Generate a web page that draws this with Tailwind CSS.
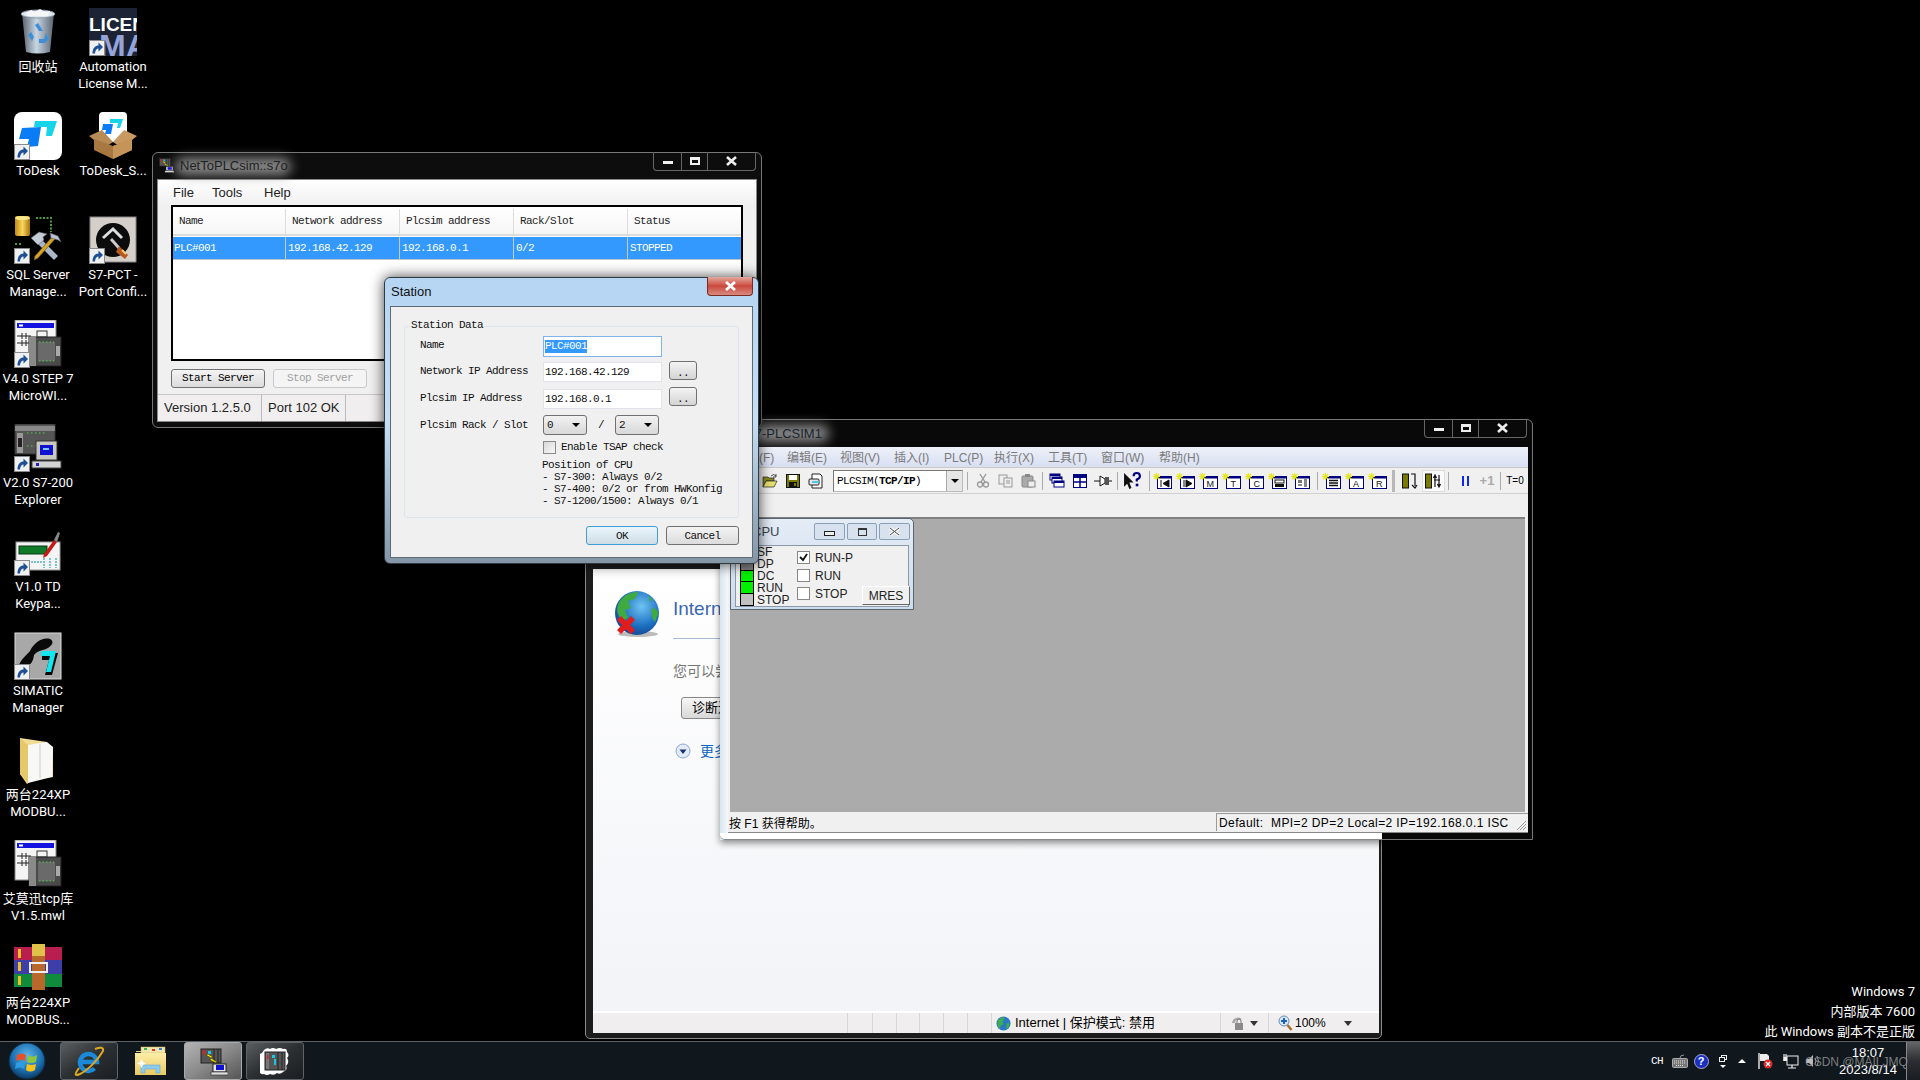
<!DOCTYPE html>
<html lang="en">
<head>
  <meta charset="UTF-8">
  <title>Desktop</title>
  <script src="https://cdn.jsdelivr.net/npm/@tailwindcss/browser@4"></script>
</head>
<body class="bg-black">
<!-- shared icons -->
<svg class="absolute w-0 h-0">
  <defs>
    <linearGradient id="bin" x1="0" x2="1"><stop offset="0" stop-color="#58626c"/><stop offset=".45" stop-color="#c8d6e4"/><stop offset="1" stop-color="#5a6470"/></linearGradient>
    <radialGradient id="orb" cx=".5" cy=".35" r=".7"><stop offset="0" stop-color="#5fb5e8"/><stop offset=".6" stop-color="#1a6fb0"/><stop offset="1" stop-color="#0b2c4f"/></radialGradient>
    <radialGradient id="globe" cx=".6" cy=".35" r=".75"><stop offset="0" stop-color="#6fc4f2"/><stop offset=".6" stop-color="#1c6fc0"/><stop offset="1" stop-color="#123a86"/></radialGradient>
    <linearGradient id="gold" x1="0" x2="1"><stop offset="0" stop-color="#c58a12"/><stop offset=".5" stop-color="#f8d660"/><stop offset="1" stop-color="#a87408"/></linearGradient>
    <linearGradient id="fold" x1="0" y1="0" x2="0" y2="1"><stop offset="0" stop-color="#fdeea8"/><stop offset="1" stop-color="#e8c864"/></linearGradient>

    <symbol id="sc" viewBox="0 0 16 16"><rect x=".5" y=".5" width="15" height="15" fill="#eef0f2" stroke="#8a8a8a"/><path d="M3.500 13.500C3.500 8 6.500 5.500 9.500 5.500V2.500L14 7l-4.500 4.500V8.500C7.500 8.500 6 10.500 6 13.500Z" fill="#1c4f94"/></symbol>

    <symbol id="step7" viewBox="0 0 48 48"><rect x="1" y="0" width="41" height="40" fill="#f4f4f4" stroke="#888"/><rect x="3" y="3" width="37" height="5" fill="#1414e0"/><rect x="5" y="4.500" width="4" height="2" fill="#fff"/><path d="M3 16h14M8 13v6M12 13v6M3 23h14M8 20v6M12 20v6" stroke="#222" fill="none"/><rect x="15" y="17" width="32" height="29" fill="#4a4a4a" stroke="#222"/><rect x="15" y="17" width="7" height="29" fill="#8a8a8a"/><rect x="24" y="22" width="17" height="19" fill="#6a6a6a"/><path d="M25 22h15M25 41h15" stroke="#4fd04f" stroke-dasharray="1.500 2"/><rect x="42" y="26" width="4" height="10" fill="#aaa"/><rect x="23" y="11" width="10" height="6" fill="none" stroke="#333"/></symbol>

    <symbol id="explorer" viewBox="0 0 48 48"><rect x="1" y="0" width="40" height="30" fill="#555" stroke="#333"/><rect x="1" y="2" width="40" height="5" fill="#888"/><path d="M13 9h20M13 22h10" stroke="#4fd04f" stroke-dasharray="1.500 2.500"/><rect x="3" y="9" width="6" height="20" fill="#999"/><rect x="4" y="14" width="4" height="9" fill="#222"/><rect x="22" y="17" width="21" height="19" fill="#c8c8c0" stroke="#333"/><rect x="26" y="21" width="13" height="10" fill="#1010d0"/><rect x="29" y="24" width="6" height="2" fill="#7cc4ff"/><rect x="18" y="37" width="29" height="7" fill="#d4d4d4" stroke="#444"/><rect x="22" y="39" width="3" height="3" fill="#2020c0"/></symbol>

    <symbol id="plcsim" viewBox="0 0 30 30"><path d="M4 4q3-3 6-1 3-2 6 0 4-2 7 0 4-1 4 3 3 3 0 6 3 4-1 8 2 4-3 6-3 3-6 1-3 3-7 1-3 2-6 0-4 1-5-3-3-3 0-6-3-4 1-7-2-4 2-5Z" fill="#fff"/><rect x="5" y="6" width="20" height="18" fill="#555" stroke="#222"/><rect x="6" y="7" width="3" height="16" fill="#777"/><rect x="7" y="9" width="1.500" height="4" fill="#e02020"/><rect x="12" y="9" width="3" height="3" fill="#19c8e0"/><rect x="14" y="13" width="2" height="6" fill="#19c8e0"/><path d="M18 6v18M22 6v18" stroke="#222"/></symbol>

    <symbol id="net" viewBox="0 0 30 30"><rect x="3" y="3" width="20" height="14" fill="#555" stroke="#222"/><rect x="5" y="4" width="2" height="5" fill="#e02020"/><rect x="10" y="5" width="3" height="3" fill="#19c8e0"/><path d="M16 3v14M20 3v14" stroke="#222"/><rect x="15" y="18" width="13" height="8" fill="#e8e8e8" stroke="#222"/><rect x="18" y="19" width="8" height="5" fill="#1010d0"/><rect x="13" y="26" width="17" height="3" fill="#ddd" stroke="#222" stroke-width=".6"/><path d="M10 8l5 3-2 1 6 4-1 1-6-3 1-2-5-3Z" fill="#ffe800" stroke="#222" stroke-width=".5"/></symbol>

    <symbol id="ie" viewBox="0 0 34 30"><path d="M9 16h16a8.500 8.500 0 1 0-2.500 6.500" fill="none" stroke="#1a8ad8" stroke-width="4.500"/><path d="M7 22C2 29 3 30 8 28c8-4 18-14 23-23 1-4-3-4-8-2" fill="none" stroke="#e0a820" stroke-width="2"/></symbol>

    <symbol id="folder" viewBox="0 0 32 30"><path d="M1 5h9l2-2h16v3H1Z" fill="#e6d48a"/><rect x="6" y="1" width="24" height="6" fill="#f3e6ac" stroke="#c8b466" stroke-width=".5"/><rect x="9" y="2" width="3" height="2" fill="#3cb04a"/><rect x="17" y="3" width="3" height="2" fill="#d83a2a"/><rect x="24" y="2" width="3" height="2" fill="#3a7ad8"/><path d="M0 7h31v22H0Z" fill="url(#fold)"/><path d="M6 27v-8h19v8h-4v-4H10v4Z" fill="#8ccbee" stroke="#6aa8d0" stroke-width=".6"/><path d="M5 16l1.500-3 1.500 3 3 1.500-3 1.500-1.500 3-1.500-3-3-1.500Z" fill="#fff" opacity=".9"/></symbol>

    <!-- base of the PLCSIM monitor buttons: window with a blue title and a yellow spark -->
    <symbol id="mon" viewBox="0 0 19 16"><rect x="4.500" y="3.500" width="14" height="12" fill="#fff" stroke="#000080"/><rect x="5" y="3" width="13.500" height="2.500" fill="#000080"/><path d="M3.500 0v7M0 3.500h7M1 1l5 5M6 1L1 6" stroke="#e6e61e" stroke-width="1.200"/></symbol>
  </defs>
</svg>

<div class="relative w-[1920px] h-[1080px] overflow-hidden bg-black text-black [font-family:'Liberation_Sans','Noto_Sans_CJK_SC',sans-serif]">

  <!-- desktop icons -->
  <div class="absolute left-0 top-[8px] flex text-white text-[13px] leading-[17px] text-center [font-family:'Roboto','Noto_Sans_CJK_SC',sans-serif]">
    <div class="w-[76px] flex flex-col">
      <div class="h-[104px] flex flex-col items-center">
        <div class="w-[48px] h-[48px] relative">
          <svg class="w-[48px] h-[48px]" viewBox="0 0 48 48"><path d="M8 5h32l-4 39q-12 3-24 0Z" fill="url(#bin)"/><ellipse cx="24" cy="6" rx="17" ry="4" fill="#dfe7ee" stroke="#8895a2"/><path d="M12 5l5-3 4 2 5-3 5 3 5-1-2 5H13Z" fill="#f4f6f8"/><path d="M24 15l5 8h-4l-4-6Zm-7 9l3 5-2 4-4-6Zm15 1l3 6-4 4h-6v-4h5Z" fill="#3f8fd6"/></svg>
        </div>
        <span class="mt-[2px]">回收站</span>
      </div>
      <div class="h-[104px] flex flex-col items-center">
        <div class="w-[48px] h-[48px] relative">
          <svg class="w-[48px] h-[48px]" viewBox="0 0 48 48"><rect x="0" y="0" width="48" height="48" rx="8" fill="#fff"/><path d="M8 16l19-1-3 19-11 1 2-8H5Z" fill="#0a7cf5"/><path d="M21 9h22l-5 15h-6l1-9H20Z" fill="#16d4ea"/></svg>
          <svg class="absolute left-0 bottom-0 w-[16px] h-[16px]"><use href="#sc"/></svg>
        </div>
        <span class="mt-[2px]">ToDesk</span>
      </div>
      <div class="h-[104px] flex flex-col items-center">
        <div class="w-[48px] h-[48px] relative">
          <svg class="w-[48px] h-[48px]" viewBox="0 0 48 48"><rect x="1" y="0" width="15" height="20" rx="2" fill="url(#gold)"/><ellipse cx="8.500" cy="2" rx="7.500" ry="2" fill="#f9e88a"/><path d="M22 2h15v14" fill="none" stroke="#4e9c40" stroke-width="2" stroke-dasharray="2 1.500"/><path d="M1 28h6" stroke="#4e9c40" stroke-width="2" stroke-dasharray="2 2"/><path d="M20 24l20 20 4-4-20-20Z" fill="#a8b8c8" stroke="#556" stroke-width=".6"/><path d="M17 22l8-6 8 2-4 3 1 3-6 5Z" fill="#c4ccd6" stroke="#556" stroke-width=".6"/><path d="M42 22l-18 20-4 2 1-4 18-20Z" fill="#d8a420" stroke="#654" stroke-width=".6"/><path d="M36 17l8 3 3 6-3-2-7-2Z" fill="#b8c4d0" stroke="#556" stroke-width=".6"/></svg>
          <svg class="absolute left-0 bottom-0 w-[16px] h-[16px]"><use href="#sc"/></svg>
        </div>
        <span class="mt-[2px]">SQL Server<br>Manage...</span>
      </div>
      <div class="h-[104px] flex flex-col items-center">
        <div class="w-[48px] h-[48px] relative">
          <svg class="w-[48px] h-[48px]"><use href="#step7"/></svg>
          <svg class="absolute left-0 bottom-0 w-[16px] h-[16px]"><use href="#sc"/></svg>
        </div>
        <span class="mt-[2px]">V4.0 STEP 7<br>MicroWI...</span>
      </div>
      <div class="h-[104px] flex flex-col items-center">
        <div class="w-[48px] h-[48px] relative">
          <svg class="w-[48px] h-[48px]"><use href="#explorer"/></svg>
          <svg class="absolute left-0 bottom-0 w-[16px] h-[16px]"><use href="#sc"/></svg>
        </div>
        <span class="mt-[2px]">V2.0 S7-200<br>Explorer</span>
      </div>
      <div class="h-[104px] flex flex-col items-center">
        <div class="w-[48px] h-[48px] relative">
          <svg class="w-[48px] h-[48px]" viewBox="0 0 48 48"><rect x="2" y="14" width="44" height="28" fill="#f4f4f4" stroke="#999"/><rect x="5" y="18" width="28" height="8" fill="#107a28" stroke="#0a3a14"/><path d="M30 30v10M36 30v10M42 30v10M8 34h20" stroke="#79c4c4" stroke-width="2" stroke-dasharray="2 1"/><path d="M30 26l10-14 3 2-10 14-4 2Z" fill="#c81818"/><path d="M40 12l4-8 2 1-3 9Z" fill="#888"/></svg>
          <svg class="absolute left-0 bottom-0 w-[16px] h-[16px]"><use href="#sc"/></svg>
        </div>
        <span class="mt-[2px]">V1.0 TD<br>Keypa...</span>
      </div>
      <div class="h-[104px] flex flex-col items-center">
        <div class="w-[48px] h-[48px] relative">
          <svg class="w-[48px] h-[48px]" viewBox="0 0 48 48"><rect x="1" y="1" width="46" height="46" fill="#a8a8a8" stroke="#ddd"/><path d="M5 33c3-7 7-9 11-14 4-8 12-14 20-12 4 2 3 6-2 9-6 3-10 2-14 7-1 8-5 14-15 10Z" fill="#0a0a0a"/><path d="M28 21h16l-6 22h-7l4-15h-7Z" fill="#0a0a0a"/><path d="M27 19h15l-5 21h-5l4-16h-9Z" fill="#14e6f0"/></svg>
          <svg class="absolute left-0 bottom-0 w-[16px] h-[16px]"><use href="#sc"/></svg>
        </div>
        <span class="mt-[2px]">SIMATIC<br>Manager</span>
      </div>
      <div class="h-[104px] flex flex-col items-center">
        <div class="w-[48px] h-[48px] relative">
          <svg class="w-[48px] h-[48px]" viewBox="0 0 48 48"><path d="M6 2l27 4v3l6 2v30l-19 2-7 5L6 38Z" fill="#f0dc94"/><path d="M14 9l19-3 6 5-1 30-24 6Z" fill="#f8f8f6"/><path d="M26 8v34" stroke="#ccc"/><path d="M6 2l8 7v38L6 38Z" fill="#e6c868"/></svg>
        </div>
        <span class="mt-[2px]">两台224XP<br>MODBU...</span>
      </div>
      <div class="h-[104px] flex flex-col items-center">
        <div class="w-[48px] h-[48px] relative">
          <svg class="w-[48px] h-[48px]"><use href="#step7"/></svg>
        </div>
        <span class="mt-[2px]">艾莫迅tcp库<br>V1.5.mwl</span>
      </div>
      <div class="h-[104px] flex flex-col items-center">
        <div class="w-[48px] h-[48px] relative">
          <svg class="w-[48px] h-[48px]" viewBox="0 0 48 48"><rect x="0" y="3" width="48" height="13" fill="#b81e4e"/><rect x="0" y="16" width="48" height="14" fill="#3e3ea8"/><rect x="0" y="30" width="48" height="13" fill="#108a3c"/><rect x="4" y="5" width="3" height="9" fill="#f0c020"/><rect x="4" y="18" width="3" height="9" fill="#f0c020"/><rect x="4" y="32" width="3" height="9" fill="#f0c020"/><rect x="18" y="0" width="13" height="12" fill="#e0c24a"/><rect x="18" y="12" width="13" height="34" fill="#b8682a"/><rect x="16" y="19" width="17" height="9" fill="none" stroke="#eee" stroke-width="2"/></svg>
        </div>
        <span class="mt-[2px]">两台224XP<br>MODBUS...</span>
      </div>
    </div>
    <div class="w-[76px] -ml-[1px] flex flex-col">
      <div class="h-[104px] flex flex-col items-center">
        <div class="w-[48px] h-[48px] relative bg-[#1c2335] overflow-hidden font-bold leading-none text-left [font-family:'Liberation_Sans',sans-serif]">
          <span class="absolute left-0 top-[7px] text-[19px] text-white whitespace-nowrap">LICEN</span>
          <span class="absolute left-[10px] top-[22px] text-[32px] text-[#94a4d8] whitespace-nowrap">MA</span>
          <svg class="absolute left-0 bottom-0 w-[16px] h-[16px]"><use href="#sc"/></svg>
        </div>
        <span class="mt-[2px]">Automation<br>License M...</span>
      </div>
      <div class="h-[104px] flex flex-col items-center">
        <div class="w-[48px] h-[48px] relative">
          <svg class="w-[48px] h-[48px]" viewBox="0 0 48 48"><rect x="10" y="0" width="28" height="30" rx="4" fill="#fff"/><path d="M14 12l10 0-2 10-6 0 1-4h-4Z" fill="#0a7cf5"/><path d="M21 7h13l-3 9h-3l1-5h-8Z" fill="#16d4ea"/><path d="M0 24l13-6 11 12-9 6Z" fill="#b88a54"/><path d="M48 24l-13-6-11 12 9 6Z" fill="#c89a62"/><path d="M5 27l19 7 19-7v11l-19 9-19-9Z" fill="#a87840"/><path d="M24 34v13l19-9V27Z" fill="#c49458"/></svg>
        </div>
        <span class="mt-[2px]">ToDesk_S...</span>
      </div>
      <div class="h-[104px] flex flex-col items-center">
        <div class="w-[48px] h-[48px] relative">
          <svg class="w-[48px] h-[48px]" viewBox="0 0 48 48"><rect x="1" y="1" width="46" height="45" fill="#d4cfc8" stroke="#888"/><circle cx="24" cy="24" r="17" fill="#0c0c0c"/><path d="M14 22l10-9 9 9" fill="none" stroke="#ddd" stroke-width="3"/><path d="M22 23l8 9" stroke="#ccc" stroke-width="3"/><path d="M30 30l9 9-3 4-9-7Z" fill="#b85a20"/><path d="M33 34l4 4" stroke="#f0d080" stroke-width="2"/></svg>
          <svg class="absolute left-0 bottom-0 w-[16px] h-[16px]"><use href="#sc"/></svg>
        </div>
        <span class="mt-[2px]">S7-PCT -<br>Port Confi...</span>
      </div>
    </div>
  </div>

  <!-- Internet Explorer window, behind the others -->
  <div class="absolute left-[585px] top-[560px] w-[797px] h-[479px] bg-[#1c1c1c] border border-[#8a8a8a] rounded-b-[5px] pl-[7px] pr-[2px] pt-[8px] pb-[5px]">
    <div class="h-full flex flex-col bg-linear-to-b from-white to-[#f2f3f7]">
      <div class="flex-1 flex pl-[21px] pt-[22px] gap-[15px]">
        <div class="relative w-[44px] h-[46px]">
          <svg class="w-[48px] h-[48px]" viewBox="0 0 48 48"><ellipse cx="24" cy="43" rx="20" ry="3" fill="#bbb"/><circle cx="23" cy="22" r="22" fill="url(#globe)"/><path d="M6 10c5-7 12-9 18-9l-3 7-7 2 3 7-6 2 3 8-6 3C2 22 2 16 6 10ZM34 5l4 3-2 3ZM38 17c4 0 6 3 6 6l-3 8c-3-3-4-9-3-14Z" fill="#3faa3f"/><path d="M3 29l4-4 5 5 5-5 4 4-5 5 5 5-4 4-5-5-5 5-4-4 5-5Z" fill="#e21c1c"/></svg>
        </div>
        <div class="flex flex-col whitespace-nowrap">
          <span class="mt-[7px] text-[19px] leading-[22px] text-[#3a67b0]">Internet Explorer 无法显示该网页</span>
          <div class="mt-[18px] h-[1px] w-[500px] bg-[#aab8d0]"></div>
          <span class="mt-[23px] text-[14px] leading-[18px] text-[#777]">您可以尝试以下操作:</span>
          <button class="mt-[17px] ml-[8px] w-[110px] h-[22px] text-left pl-[10px] text-[13px] leading-[18px] border border-[#888] rounded-[3px] bg-linear-to-b from-[#f6f6f6] to-[#d8d8d8]">诊断连接问题</button>
          <div class="mt-[23px] flex items-center gap-[9px] ml-[2px]">
            <svg class="w-[16px] h-[16px]" viewBox="0 0 16 16"><circle cx="8" cy="8" r="7" fill="#e2eaf8" stroke="#8ea8d0"/><path d="M4.500 6.500h7L8 11Z" fill="#17306e"/></svg>
            <span class="text-[14px] leading-[18px] text-[#0a66c2]">更多信息</span>
          </div>
        </div>
      </div>
      <div class="h-[22px] flex items-center bg-[#f0eeee] border-t-2 border-white text-[13px]">
        <div class="w-[254px] h-full"></div>
        <div class="w-[25px] h-full border-l border-[#d8d6d6]"></div>
        <div class="w-[24px] h-full border-l border-[#d8d6d6]"></div>
        <div class="w-[23px] h-full border-l border-[#d8d6d6]"></div>
        <div class="w-[24px] h-full border-l border-[#d8d6d6]"></div>
        <div class="w-[24px] h-full border-l border-[#d8d6d6]"></div>
        <div class="w-[24px] h-full border-l border-[#d8d6d6]"></div>
        <div class="w-[229px] h-full border-l border-[#d8d6d6] flex items-center pl-[4px] gap-[4px]">
          <svg class="w-[15px] h-[15px]" viewBox="0 0 16 16"><circle cx="8" cy="8" r="7.500" fill="#2c78c8"/><path d="M3 4c2-3 5-3 6-2L7 6l1 3-3 1-1 4C1 10 1 7 3 4ZM11 8l3-1c1 3 0 5-3 7Z" fill="#3cae4a"/></svg>
          <span class="whitespace-nowrap">Internet | 保护模式: 禁用</span>
        </div>
        <div class="w-[48px] h-full border-l border-[#d8d6d6] flex items-center pl-[8px] gap-[5px]">
          <svg class="w-[16px] h-[17px]" viewBox="0 0 16 17"><path d="M3 8a6 6 0 0 1 10-4l-3 1a3 3 0 0 0-4 3Z" fill="#aaa"/><rect x="6" y="8" width="8" height="7" fill="#8a8a8a"/><path d="M8 8V6a2 2 0 0 1 4 0v2" fill="none" stroke="#777"/></svg>
          <span class="w-0 h-0 border-x-[4px] border-x-transparent border-t-[5px] border-t-[#333]"></span>
        </div>
        <div class="flex-1 h-full border-l border-[#d8d6d6] flex items-center pl-[9px] text-[12px]">
          <svg class="w-[15px] h-[16px]" viewBox="0 0 15 16"><circle cx="6" cy="6" r="5" fill="#dceaf8" stroke="#6a8ab0"/><path d="M6 3v6M3 6h6" stroke="#1c60c0" stroke-width="2"/><path d="M9.500 10l4 5" stroke="#a87030" stroke-width="2.500"/></svg>
          <span class="ml-[2px]">100%</span>
          <span class="ml-[18px] w-0 h-0 border-x-[4px] border-x-transparent border-t-[5px] border-t-[#333]"></span>
        </div>
      </div>
    </div>
  </div>

  <!-- S7-PLCSIM1 -->
  <div class="absolute left-[720px] top-[419px] w-[813px] h-[421px] rounded-t-[6px] bg-[#090909] border border-[#777] shadow-[0_3px_7px_rgba(0,0,0,0.45)]">
    <div class="absolute left-[-1px] top-[140px] bottom-[-1px] w-[8px] bg-linear-to-r from-[#d8e6f0] to-[#f4f8fa]"></div>
    <div class="absolute left-[-1px] bottom-[-1px] w-[662px] h-[7px] rounded-bl-[5px] bg-white border-b border-[#888]"></div>
    <div class="h-[27px] relative">
      <span class="absolute left-[18px] top-[5px] w-[90px] h-[17px] rounded-full bg-[#8c8c8c] blur-[6px]"></span>
      <span class="absolute left-[25px] top-[5px] text-[13px] leading-[17px] text-[#1a2530]">S7-PLCSIM1</span>
      <div class="absolute right-[5px] top-[-1px] h-[19px] flex border border-t-0 border-[#666] rounded-b-[4px] text-white">
        <div class="w-[28px] flex items-center justify-center border-r border-[#666]"><span class="w-[10px] h-[3px] mt-[3px] bg-[#eee]"></span></div>
        <div class="w-[26px] flex items-center justify-center border-r border-[#666]"><span class="w-[10px] h-[8px] border-2 border-t-[3px] border-[#eee]"></span></div>
        <div class="w-[47px] flex items-center justify-center"><svg class="w-[11px] h-[10px]" viewBox="0 0 11 10"><path d="M1 1l9 8M10 1l-9 8" stroke="#eee" stroke-width="2.600"/></svg></div>
      </div>
    </div>
    <div class="absolute left-[7px] right-[4px] top-[27px] bottom-[6px] flex flex-col bg-[#f0f0f0] border-b border-[#888]">
      <!-- menu -->
      <div class="h-[20px] shrink-0 flex items-center pl-[7px] pt-[2px] bg-linear-to-b from-[#eef1f9] to-[#d8dff2] text-[12px] text-[#7a7a7a] whitespace-nowrap">
        <span class="w-[52px]">文件(F)</span>
        <span class="w-[53px]">编辑(E)</span>
        <span class="w-[54px]">视图(V)</span>
        <span class="w-[50px]">插入(I)</span>
        <span class="w-[50px]">PLC(P)</span>
        <span class="w-[54px]">执行(X)</span>
        <span class="w-[53px]">工具(T)</span>
        <span class="w-[58px]">窗口(W)</span>
        <span>帮助(H)</span>
      </div>
      <!-- toolbar -->
      <div class="h-[27px] shrink-0 flex items-center pl-[30px] border-t border-[#c8c8c8] border-b border-b-[#d0d0d0] bg-[#f0f0f0]">
        <div class="w-[23px] flex justify-center"><svg class="w-[16px] h-[16px]" viewBox="0 0 16 16"><path d="M1 4h5l1 1h5v3H4L1 14Z" fill="#8a8a20" stroke="#222" stroke-width=".7"/><path d="M4 8h11l-3 6H1Z" fill="#e8e070" stroke="#222" stroke-width=".7"/><path d="M9 3q3-3 5 0M14 1v3h-3" fill="none" stroke="#222" stroke-width=".8"/></svg></div>
        <div class="w-[23px] flex justify-center"><svg class="w-[14px] h-[14px]" viewBox="0 0 14 14"><rect x=".5" y=".5" width="13" height="13" fill="#7a7a00" stroke="#111"/><rect x="3" y="1" width="8" height="5" fill="#fff"/><rect x="3" y="8" width="8" height="5" fill="#111"/><rect x="8" y="9" width="2" height="3" fill="#7a7a00"/></svg></div>
        <div class="w-[23px] flex justify-center"><svg class="w-[16px] h-[16px]" viewBox="0 0 16 16"><path d="M4 1h8l2 2v12H4Z" fill="#fff" stroke="#222"/><rect x="1" y="6" width="10" height="6" rx="1" fill="#e6e6e6" stroke="#222"/><rect x="4" y="8" width="7" height="2" fill="#4cc8e0"/></svg></div>
        <div class="ml-[6px] w-[130px] h-[22px] flex bg-white border border-[#777] border-r-[#bbb] border-b-[#bbb] [font-family:'Liberation_Mono',monospace] text-[11px] tracking-[-0.6px]">
          <span class="flex-1 pl-[3px] leading-[20px] whitespace-nowrap">PLCSIM(<b>TCP/IP</b>)</span>
          <span class="w-[16px] flex items-center justify-center bg-[#e6e6e6] border-l border-[#aaa]"><span class="w-0 h-0 border-x-[4px] border-x-transparent border-t-[4px] border-t-black"></span></span>
        </div>
        <span class="ml-[4px] mr-[3px] w-[1px] h-[18px] bg-[#aaa]"></span>
        <div class="w-[23px] flex justify-center"><svg class="w-[14px] h-[15px]" viewBox="0 0 14 15"><path d="M4 1l5 8M10 1L5 9" stroke="#999" stroke-width="1.400"/><circle cx="4" cy="11.500" r="2.500" fill="none" stroke="#999" stroke-width="1.300"/><circle cx="10" cy="11.500" r="2.500" fill="none" stroke="#999" stroke-width="1.300"/></svg></div>
        <div class="w-[23px] flex justify-center"><svg class="w-[15px] h-[14px]" viewBox="0 0 15 14"><rect x="1" y="1" width="8" height="9" fill="#eee" stroke="#999"/><rect x="6" y="4" width="8" height="9" fill="#eee" stroke="#999"/><path d="M8 7h4M8 9h4" stroke="#999"/></svg></div>
        <div class="w-[23px] flex justify-center"><svg class="w-[15px] h-[14px]" viewBox="0 0 15 14"><rect x="1" y="2" width="11" height="11" rx="1" fill="#aaa" stroke="#888"/><rect x="4" y="0" width="5" height="3" fill="#888"/><rect x="7" y="7" width="7" height="6" fill="#eee" stroke="#888"/></svg></div>
        <span class="ml-[2px] mr-[2px] w-[1px] h-[18px] bg-[#aaa]"></span>
        <div class="w-[23px] flex justify-center"><svg class="w-[16px] h-[15px]" viewBox="0 0 16 15"><rect x="1" y="1" width="10" height="6" fill="#fff" stroke="#000080"/><rect x="1" y="1" width="10" height="2" fill="#000080"/><rect x="3" y="4" width="10" height="6" fill="#fff" stroke="#000080"/><rect x="3" y="4" width="10" height="2" fill="#000080"/><rect x="5" y="8" width="10" height="6" fill="#fff" stroke="#000080"/><rect x="5" y="8" width="10" height="2" fill="#000080"/></svg></div>
        <div class="w-[23px] flex justify-center"><svg class="w-[14px] h-[14px]" viewBox="0 0 14 14"><rect x=".5" y=".5" width="13" height="13" fill="#fff" stroke="#000080"/><rect x="1" y="1" width="12" height="3" fill="#000080"/><path d="M7 1v12M1 8h12" stroke="#000080" stroke-width="1.500"/></svg></div>
        <div class="w-[23px] flex justify-center"><svg class="w-[18px] h-[12px]" viewBox="0 0 18 12"><path d="M0 6h6M12 6h6" stroke="#111" stroke-width="1.200"/><path d="M6 1l5 3v4l-5 3Z" fill="#fff" stroke="#111"/><rect x="11" y="2" width="4" height="8" fill="#555"/></svg></div>
        <span class="ml-[3px] mr-[2px] w-[1px] h-[18px] bg-[#aaa]"></span>
        <div class="w-[23px] flex justify-center"><svg class="w-[18px] h-[18px]" viewBox="0 0 17 17"><path d="M1 1v13l3-3 2 5 2-1-2-5h4Z" fill="#111"/><path d="M10 4q0-3 3-3t3 3q0 2-3 3v2" fill="none" stroke="#000080" stroke-width="2"/><rect x="12" y="11" width="2.500" height="2.500" fill="#000080"/></svg></div>
        <span class="ml-[6px] mr-[1px] w-[1px] h-[20px] bg-[#aaa]"></span>
        <!-- monitor windows -->
        <div class="w-[23px] flex justify-center"><svg class="w-[19px] h-[16px]" viewBox="0 0 19 16"><use href="#mon" width="19" height="16"/><path d="M8 7v7M16 7l-6 3.500 6 3.500Z" fill="#111" stroke="#111"/></svg></div>
        <div class="w-[23px] flex justify-center"><svg class="w-[19px] h-[16px]" viewBox="0 0 19 16"><use href="#mon" width="19" height="16"/><path d="M8 7v7M10 7l6 3.500-6 3.500Z" fill="#111" stroke="#111"/></svg></div>
        <div class="w-[23px] flex justify-center"><svg class="w-[19px] h-[16px]" viewBox="0 0 19 16"><use href="#mon" width="19" height="16"/><text x="7.500" y="14" font-size="9" fill="#111">M</text></svg></div>
        <div class="w-[23px] flex justify-center"><svg class="w-[19px] h-[16px]" viewBox="0 0 19 16"><use href="#mon" width="19" height="16"/><text x="8.500" y="14" font-size="9" fill="#111">T</text></svg></div>
        <div class="w-[23px] flex justify-center"><svg class="w-[19px] h-[16px]" viewBox="0 0 19 16"><use href="#mon" width="19" height="16"/><text x="8.500" y="14" font-size="9" fill="#111">C</text></svg></div>
        <div class="w-[23px] flex justify-center"><svg class="w-[19px] h-[16px]" viewBox="0 0 19 16"><use href="#mon" width="19" height="16"/><rect x="7" y="7" width="9" height="3" fill="none" stroke="#111"/><rect x="7" y="11" width="9" height="3" fill="#111"/></svg></div>
        <div class="w-[23px] flex justify-center"><svg class="w-[19px] h-[16px]" viewBox="0 0 19 16"><use href="#mon" width="19" height="16"/><rect x="7" y="7" width="4" height="3" fill="#777"/><path d="M13 7h3M13 9h3M13 11h3M13 13h3M7 12h4" stroke="#111"/></svg></div>
        <span class="ml-[5px] mr-[2px] w-[1px] h-[18px] bg-[#aaa]"></span>
        <div class="w-[23px] flex justify-center"><svg class="w-[19px] h-[16px]" viewBox="0 0 19 16"><use href="#mon" width="19" height="16"/><path d="M7 7.500h9M7 10h9M7 12.500h9" stroke="#111" stroke-width="1.400"/></svg></div>
        <div class="w-[23px] flex justify-center"><svg class="w-[19px] h-[16px]" viewBox="0 0 19 16"><use href="#mon" width="19" height="16"/><text x="8" y="14" font-size="9" fill="#111">A</text></svg></div>
        <div class="w-[23px] flex justify-center"><svg class="w-[19px] h-[16px]" viewBox="0 0 19 16"><use href="#mon" width="19" height="16"/><text x="8" y="14" font-size="9" fill="#111">R</text></svg></div>
        <span class="ml-[3px] mr-[3px] w-[3px] h-[22px] bg-[#b8b8b8]"></span>
        <div class="w-[23px] flex justify-center"><svg class="w-[16px] h-[16px]" viewBox="0 0 16 16"><rect x=".5" y="1" width="6" height="14" fill="#7a7a00" stroke="#111"/><path d="M9 1h4v12M10 12l3 3 2-3" fill="none" stroke="#111" stroke-width="1.200"/></svg></div>
        <div class="ml-[1px] w-[23px] h-[22px] flex items-center justify-center bg-[#fafafa] border border-[#ddd]"><svg class="w-[18px] h-[16px]" viewBox="0 0 18 16"><rect x=".5" y="1" width="6" height="14" fill="#7a7a00" stroke="#111"/><path d="M10 2v12M14 2v12M8.500 5L10 2l1.500 3M12.500 11l1.500 3 1.500-3" fill="none" stroke="#111" stroke-width="1.200"/><path d="M9 7h6" stroke="#111"/></svg></div>
        <span class="ml-[3px] mr-[5px] w-[1px] h-[18px] bg-[#aaa]"></span>
        <div class="w-[23px] flex justify-center gap-[3px]"><span class="w-[2px] h-[10px] bg-[#0a2af0]"></span><span class="w-[2px] h-[10px] bg-[#0a2af0]"></span></div>
        <span class="w-[20px] text-center text-[13px] font-bold text-[#aaa]">+1</span>
        <span class="ml-[3px] w-[1px] h-[18px] bg-[#aaa]"></span>
        <span class="ml-[2px] w-[24px] text-center text-[10px]">T=0</span>
      </div>
      <div class="h-[23px] shrink-0"></div>
      <!-- MDI area -->
      <div class="flex-1 relative ml-[2px] mr-[3px] bg-[#ababab] border-t-2 border-[#808080]">
        <div class="absolute left-0 top-[-1px] w-[184px] h-[92px] flex flex-col rounded-tr-[5px] bg-linear-to-b from-[#e4ecf6] to-[#cddced] border border-[#5a6670]">
          <div class="h-[26px] shrink-0 flex items-center relative">
            <span class="ml-[21px] text-[13px] text-[#3a4450]">CPU</span>
            <div class="absolute right-[3px] top-[4px] flex gap-[2px]">
              <div class="w-[31px] h-[17px] flex items-center justify-center rounded-[2px] border border-[#8aa0b8] bg-[#d8e2ee]"><span class="w-[11px] h-[5px] mt-[3px] border border-[#222] bg-[#eee]"></span></div>
              <div class="w-[30px] h-[17px] flex items-center justify-center rounded-[2px] border border-[#8aa0b8] bg-[#d8e2ee]"><span class="w-[9px] h-[8px] border border-t-2 border-[#333]"></span></div>
              <div class="w-[31px] h-[17px] flex items-center justify-center rounded-[2px] border border-[#8aa0b8] bg-[#d8e2ee]"><svg class="w-[11px] h-[9px]" viewBox="0 0 11 9"><path d="M1 1l9 7M10 1L1 8" stroke="#fff" stroke-width="3"/><path d="M1 1l9 7M10 1L1 8" stroke="#444" stroke-width="1"/></svg></div>
            </div>
          </div>
          <div class="flex-1 mx-[4px] mb-[4px] flex bg-[#f0f0f0] border border-[#8a98a8] pl-[4px] text-[12px] leading-[12px] text-[#222]">
            <div class="w-[14px] h-[60px] flex flex-col border border-black">
              <span class="flex-1 bg-[#808080] border-b border-black"></span>
              <span class="flex-1 bg-[#808080] border-b border-black"></span>
              <span class="flex-1 bg-[#00f000] border-b border-black"></span>
              <span class="flex-1 bg-[#00f000] border-b border-black"></span>
              <span class="flex-1 bg-[#c0c0c0]"></span>
            </div>
            <div class="ml-[3px] w-[40px] flex flex-col">
              <span>SF</span><span>DP</span><span>DC</span><span>RUN</span><span>STOP</span>
            </div>
            <div class="mt-[5px] flex flex-col gap-[5px]">
              <div class="h-[13px] flex items-center gap-[5px]"><span class="w-[13px] h-[13px] flex items-center justify-center bg-white border border-[#888]"><svg class="w-[9px] h-[9px]" viewBox="0 0 9 9"><path d="M1 4l3 3 4-6" fill="none" stroke="#111" stroke-width="1.800"/></svg></span><span>RUN-P</span></div>
              <div class="h-[13px] flex items-center gap-[5px]"><span class="w-[13px] h-[13px] bg-white border border-[#888]"></span><span>RUN</span></div>
              <div class="h-[13px] flex items-center gap-[5px]"><span class="w-[13px] h-[13px] bg-white border border-[#888]"></span><span>STOP</span></div>
            </div>
            <button class="absolute left-[131px] top-[67px] w-[48px] h-[19px] bg-[#f0f0f0] border border-white border-r-[#666] border-b-[#666] text-[12px]">MRES</button>
          </div>
        </div>
      </div>
      <div class="h-[19px] shrink-0 mt-[1px] relative flex items-start text-[12px] whitespace-nowrap">
        <span class="w-[488px] pl-[1px] pt-[2px]">按 F1 获得帮助。</span>
        <span class="flex-1 h-[18px] pl-[2px] leading-[18px] border-l border-t border-[#999] tracking-[0.4px]">Default:&nbsp; MPI=2 DP=2 Local=2 IP=192.168.0.1 ISC</span>
        <svg class="absolute right-[1px] bottom-[1px] w-[12px] h-[12px]" viewBox="0 0 12 12"><path d="M11 2l-9 9M11 5l-6 6M11 8l-3 3" stroke="#9a9a9a"/></svg>
      </div>
    </div>
  </div>

  <!-- NetToPLCsim -->
  <div class="absolute left-[152px] top-[152px] w-[610px] h-[276px] rounded-[6px] bg-[#0d0d0d] border border-[#777]">
    <div class="h-[26px] relative">
      <svg class="absolute left-[5px] top-[4px] w-[16px] h-[16px]"><use href="#net"/></svg>
      <span class="absolute left-[22px] top-[5px] w-[116px] h-[17px] rounded-full bg-[#8c8c8c] blur-[6px]"></span>
      <span class="absolute left-[27px] top-[4px] text-[13px] leading-[17px] text-[#222]">NetToPLCsim::s7o</span>
      <div class="absolute right-[5px] top-[-1px] h-[19px] flex border border-t-0 border-[#666] rounded-b-[4px]">
        <div class="w-[28px] flex items-center justify-center border-r border-[#666]"><span class="w-[10px] h-[3px] mt-[3px] bg-[#eee]"></span></div>
        <div class="w-[26px] flex items-center justify-center border-r border-[#666]"><span class="w-[10px] h-[8px] border-2 border-t-[3px] border-[#eee]"></span></div>
        <div class="w-[47px] flex items-center justify-center"><svg class="w-[11px] h-[10px]" viewBox="0 0 11 10"><path d="M1 1l9 8M10 1l-9 8" stroke="#eee" stroke-width="2.600"/></svg></div>
      </div>
    </div>
    <div class="mx-[4px] h-[243px] flex flex-col bg-[#f0f0f0] border border-[#888]">
      <div class="h-[25px] shrink-0 flex items-center pl-[15px] text-[13px] bg-linear-to-b from-white to-[#f0f0f0] text-[#222]">
        <span class="w-[39px]">File</span><span class="w-[52px]">Tools</span><span>Help</span>
      </div>
      <div class="mx-[13px] h-[158px] bg-white border-2 border-black [font-family:'Liberation_Mono',monospace] text-[11px] tracking-[-0.6px] whitespace-nowrap">
        <div class="h-[29px] pt-[2px] flex bg-linear-to-b from-white to-[#f6f6f6] border-b-2 border-[#dcdcdc] leading-[25px] text-[#222]">
          <span class="w-[113px] pl-[6px] border-r border-[#ddd]">Name</span>
          <span class="w-[114px] pl-[6px] border-r border-[#ddd]">Network address</span>
          <span class="w-[114px] pl-[6px] border-r border-[#ddd]">Plcsim address</span>
          <span class="w-[114px] pl-[6px] border-r border-[#ddd]">Rack/Slot</span>
          <span class="flex-1 pl-[6px]">Status</span>
        </div>
        <div class="h-[23px] mt-[1px] flex bg-[#3399ff] border-b border-[#b8c4d0] leading-[22px] text-white">
          <span class="w-[113px] pl-[1px] border-r border-[#c0ccd8]">PLC#001</span>
          <span class="w-[114px] pl-[2px] border-r border-[#c0ccd8]">192.168.42.129</span>
          <span class="w-[114px] pl-[2px] border-r border-[#c0ccd8]">192.168.0.1</span>
          <span class="w-[114px] pl-[2px] border-r border-[#c0ccd8]">0/2</span>
          <span class="flex-1 pl-[2px]">STOPPED</span>
        </div>
      </div>
      <div class="mt-[8px] ml-[13px] flex gap-[8px] [font-family:'Liberation_Mono',monospace] text-[11px] tracking-[-0.6px]">
        <button class="w-[94px] h-[19px] border border-[#707070] rounded-[3px] bg-linear-to-b from-[#f4f4f4] to-[#dcdcdc]">Start Server</button>
        <button class="w-[94px] h-[19px] border border-[#c8c8c8] rounded-[3px] bg-[#f4f4f4] text-[#a0a0a0]">Stop Server</button>
      </div>
      <div class="mt-[6px] flex-1 flex items-center bg-[#f0eeee] border-t border-[#c8c8c8] text-[13px] text-[#222]">
        <span class="w-[104px] h-full pl-[6px] leading-[26px] border-r border-[#bbb]">Version 1.2.5.0</span>
        <span class="w-[84px] h-full pl-[6px] leading-[26px] border-r border-[#bbb]">Port 102 OK</span>
      </div>
    </div>
  </div>

  <!-- Station dialog -->
  <div class="absolute left-[384px] top-[277px] w-[375px] h-[287px] rounded-[6px] border border-[#2e3a44] bg-linear-to-b from-[#b5d5f3] via-[#c6def6] to-[#8496a6] shadow-[0_0_14px_rgba(0,0,0,0.75)]">
    <div class="h-[28px] relative">
      <span class="absolute left-[6px] top-[5px] text-[13px] leading-[17px] text-[#111]">Station</span>
      <div class="absolute right-[5px] top-[-1px] w-[46px] h-[19px] flex items-center justify-center rounded-b-[4px] border border-t-0 border-[#7a2a22] bg-linear-to-b from-[#e2a79e] via-[#c9483c] to-[#d88a80]"><svg class="w-[11px] h-[10px]" viewBox="0 0 11 10"><path d="M1 1l9 8M10 1l-9 8" stroke="#fff" stroke-width="2.800"/></svg></div>
    </div>
    <div class="mx-[5px] h-[252px] flex flex-col bg-[#f0f0f0] border border-[#5c6a76] [font-family:'Liberation_Mono',monospace] text-[11px] tracking-[-0.6px] text-[#111] whitespace-nowrap">
      <div class="relative mt-[19px] mx-[13px] h-[192px] border border-[#dce4ec] rounded-[3px] pl-[15px] pt-[9px]">
        <span class="absolute left-[5px] top-[-8px] px-[1px] bg-[#f0f0f0] leading-[12px]">Station Data</span>
        <div class="flex items-start">
          <span class="w-[123px] leading-[18px]">Name</span>
          <div class="w-[119px] h-[21px] pl-[1px] flex items-center bg-white border border-[#7eb4ea]"><span class="bg-[#3399ff] text-white leading-[13px]">PLC#001</span></div>
        </div>
        <div class="mt-[5px] flex items-start">
          <span class="w-[123px] leading-[18px]">Network IP Address</span>
          <div class="w-[119px] h-[20px] pl-[1px] flex items-center bg-white border border-[#e2e3ea]">192.168.42.129</div>
          <button class="ml-[7px] -mt-[1px] w-[28px] h-[19px] pt-[3px] border border-[#707070] rounded-[3px] bg-linear-to-b from-[#f4f4f4] to-[#d4d4d4]">..</button>
        </div>
        <div class="mt-[7px] flex items-start">
          <span class="w-[123px] leading-[18px]">Plcsim IP Address</span>
          <div class="w-[119px] h-[20px] pl-[1px] flex items-center bg-white border border-[#e2e3ea]">192.168.0.1</div>
          <button class="ml-[7px] -mt-[2px] w-[28px] h-[19px] pt-[3px] border border-[#707070] rounded-[3px] bg-linear-to-b from-[#f4f4f4] to-[#d4d4d4]">..</button>
        </div>
        <div class="mt-[6px] flex items-center">
          <span class="w-[123px]">Plcsim Rack / Slot</span>
          <div class="w-[44px] h-[20px] px-[3px] flex items-center justify-between border border-[#707070] rounded-[3px] bg-linear-to-b from-[#f2f2f2] to-[#d8d8d8]">0<span class="mr-[3px] w-0 h-0 border-x-[4px] border-x-transparent border-t-[4px] border-t-black"></span></div>
          <span class="w-[28px] text-center">/</span>
          <div class="w-[44px] h-[20px] px-[3px] flex items-center justify-between border border-[#707070] rounded-[3px] bg-linear-to-b from-[#f2f2f2] to-[#d8d8d8]">2<span class="mr-[3px] w-0 h-0 border-x-[4px] border-x-transparent border-t-[4px] border-t-black"></span></div>
        </div>
        <div class="mt-[4px] ml-[123px] flex items-center gap-[5px]">
          <span class="w-[13px] h-[13px] border border-[#8a8a8a] bg-linear-to-br from-[#d8d8d8] to-[#f8f8f8]"></span>
          <span>Enable TSAP check</span>
        </div>
        <div class="mt-[3px] ml-[122px] leading-[12px]">
          Position of CPU<br>- S7-300: Always 0/2<br>- S7-400: 0/2 or from HWKonfig<br>- S7-1200/1500: Always 0/1
        </div>
      </div>
      <div class="mt-[8px] mr-[13px] flex justify-end gap-[8px]">
        <button class="w-[72px] h-[19px] pt-[1px] border border-[#3c9fd8] rounded-[3px] bg-linear-to-b from-[#eaf6fc] to-[#d0dce4]">OK</button>
        <button class="w-[73px] h-[19px] pt-[1px] border border-[#707070] rounded-[3px] bg-linear-to-b from-[#f4f4f4] to-[#dcdcdc]">Cancel</button>
      </div>
    </div>
  </div>

  <!-- windows activation notice -->
  <div class="absolute right-[5px] top-[982px] flex flex-col items-end text-[13px] leading-[20px] text-white [font-family:'Roboto','Noto_Sans_CJK_SC',sans-serif]">
    <span>Windows 7</span>
    <span>内部版本 7600</span>
    <span>此 Windows 副本不是正版</span>
  </div>

  <!-- taskbar -->
  <div class="absolute left-0 right-0 bottom-0 h-[39px] flex items-stretch bg-[#10181e] border-t border-[#5a6268] text-white">
    <div class="w-[60px] flex items-center pl-[8px]">
      <svg class="w-[38px] h-[38px]" viewBox="0 0 38 38"><circle cx="19" cy="19" r="18" fill="url(#orb)" stroke="#0c2a44"/><path d="M9 13q5-3 9 0l-1 6q-4-3-9 0Z" fill="#e8502a"/><path d="M20 13q4 3 9 0l-1 7q-5 2-9 0Z" fill="#8cc63f"/><path d="M8 21q5-3 9 0l-1 6q-4-3-9 0Z" fill="#2f9be0"/><path d="M19 22q4 2 9 0l-1 6q-5 3-9 0Z" fill="#f7c21a"/></svg>
    </div>
    <div class="w-[58px] flex items-center justify-center border border-[#5e6468] rounded-[3px] bg-linear-to-br from-[#5c5f62] via-[#2c2f32] to-[#1a1e22]"><svg class="w-[34px] h-[30px]"><use href="#ie"/></svg></div>
    <div class="ml-[3px] w-[60px] flex items-center justify-center"><svg class="w-[32px] h-[30px]"><use href="#folder"/></svg></div>
    <div class="ml-[3px] w-[58px] flex items-center justify-center border border-[#aaa] rounded-[3px] bg-linear-to-br from-[#b4b4b4] via-[#8a8a8a] to-[#555]"><svg class="w-[30px] h-[30px]"><use href="#net"/></svg></div>
    <div class="ml-[4px] w-[58px] flex items-center justify-center border border-[#5e6468] rounded-[3px] bg-linear-to-br from-[#5c5f62] via-[#2c2f32] to-[#1a1e22]"><svg class="w-[30px] h-[30px]"><use href="#plcsim"/></svg></div>

    <div class="ml-auto w-[275px] flex items-center text-[12px]">
      <span class="w-[24px] text-center [font-family:'Liberation_Mono',monospace] text-[11px] tracking-[-0.6px]">CH</span>
      <div class="w-[21px] flex justify-center"><svg class="w-[16px] h-[14px]" viewBox="0 0 16 14"><path d="M8 4q0-3 4-3" fill="none" stroke="#999"/><rect x=".5" y="4.500" width="15" height="9" rx="1" fill="#777" stroke="#aaa"/><path d="M2 7h12M2 9h12M4 11.500h8" stroke="#ddd" stroke-dasharray="1 1"/></svg></div>
      <div class="w-[22px] flex justify-center"><span class="w-[15px] h-[15px] rounded-full bg-[#1a2fc0] border border-[#aac] flex items-center justify-center text-[11px] font-bold leading-none">?</span></div>
      <div class="w-[22px] flex flex-col items-center gap-[3px]">
        <svg class="w-[8px] h-[7px]" viewBox="0 0 8 7"><rect x="2.500" y=".5" width="5" height="4" fill="none" stroke="#eee"/><rect x=".5" y="2.500" width="5" height="4" fill="#10181e" stroke="#eee"/></svg>
        <span class="w-0 h-0 border-x-[3px] border-x-transparent border-t-[3px] border-t-white"></span>
      </div>
      <div class="w-[16px] flex justify-center"><span class="w-0 h-0 border-x-[4px] border-x-transparent border-b-[4px] border-b-white"></span></div>
      <div class="ml-[4px] w-[22px] flex justify-center"><svg class="w-[16px] h-[18px]" viewBox="0 0 16 18"><path d="M2 1v16" stroke="#ddd" stroke-width="1.500"/><path d="M3 2h7l2 2v5H3Z" fill="#eee"/><circle cx="11" cy="12" r="4.500" fill="#e02828"/><path d="M9 10l4 4M13 10l-4 4" stroke="#fff" stroke-width="1.300"/></svg></div>
      <div class="ml-[4px] w-[22px] flex justify-center"><svg class="w-[16px] h-[16px]" viewBox="0 0 16 16"><rect x="4" y="3" width="11" height="9" fill="#10181e" stroke="#eee"/><path d="M1 1v7M3 1v7M9 12v3M5 15h8" stroke="#eee" stroke-width="1.200"/><rect x=".5" y="4" width="3.500" height="4" fill="#eee"/></svg></div>
      <div class="w-[20px] flex justify-center"><svg class="w-[15px] h-[14px]" viewBox="0 0 15 14"><path d="M1 5h3l4-4v12L4 9H1Z" fill="#bbb"/><path d="M10 4q2 3 0 6M12 2q3 5 0 10" fill="none" stroke="#999"/></svg></div>
      <div class="ml-[8px] w-[76px] flex flex-col items-center text-[13px] leading-[17px]"><span>18:07</span><span>2023/8/14</span></div>
      <div class="w-[14px] h-full bg-linear-to-b from-[#666] via-[#2a2e32] to-[#1a1e22] border-l border-[#888]"></div>
    </div>
  </div>
  <span class="absolute left-[1805px] top-[1053px] text-[12px] leading-[18px] text-[#8a8a8a]/90 whitespace-nowrap">CSDN @MAILJMQ</span>
</div>
</body>
</html>
